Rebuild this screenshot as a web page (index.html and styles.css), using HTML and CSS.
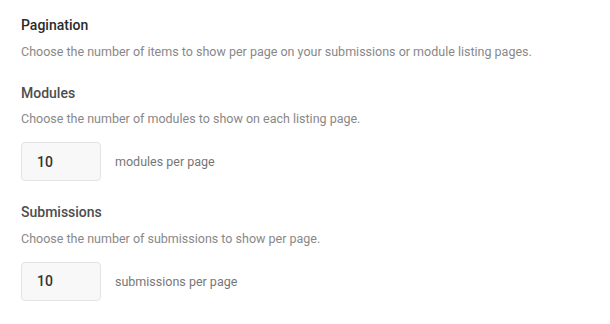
FILE: index.html
```html
<!DOCTYPE html>
<html>
<head>
<meta charset="utf-8">
<link rel="stylesheet" href="styles.css">
</head>
<body>
<div class="settings">
  <section class="group">
    <h2 class="title">Pagination</h2>
    <p class="desc">Choose the number of items to show per page on your submissions or module listing pages.</p>
  </section>
  <section class="group">
    <h3 class="subtitle">Modules</h3>
    <p class="desc">Choose the number of modules to show on each listing page.</p>
    <div class="field">
      <input class="num" type="text" value="10">
      <span class="unit">modules per page</span>
    </div>
  </section>
  <section class="group">
    <h3 class="subtitle">Submissions</h3>
    <p class="desc">Choose the number of submissions to show per page.</p>
    <div class="field">
      <input class="num" type="text" value="10">
      <span class="unit">submissions per page</span>
    </div>
  </section>
</div>
</body>
</html>
```
FILE: styles.css
```css
html, body {
  margin: 0;
  background: #fff;
}
body {
  font-family: Roboto, "Liberation Sans", sans-serif;
}
.settings {
  padding: 15px 21px 0;
}
.title {
  margin: 0;
  font-size: 14px;
  font-weight: 500;
  line-height: 20px;
  color: #2b2b2b;
}
.subtitle {
  margin: 0;
  font-size: 14px;
  font-weight: 500;
  line-height: 20px;
  color: #4d4d4d;
}
.desc {
  margin: 7.5px 0 0;
  font-size: 12.5px;
  line-height: 18px;
  color: #888;
}
.group:nth-child(2) {
  margin-top: 22px;
}
.group:nth-child(3) {
  margin-top: 21px;
}
.field {
  display: flex;
  align-items: center;
  gap: 14px;
  margin-top: 14px;
}
.num {
  box-sizing: border-box;
  width: 80px;
  height: 39px;
  padding: 0 15px;
  border: 1px solid #e3e3e3;
  border-radius: 4px;
  background: #f8f8f8;
  font-family: Roboto, "Liberation Sans", sans-serif;
  font-size: 14px;
  font-weight: 500;
  color: #333;
  outline: none;
}
.unit {
  font-size: 12.5px;
  color: #777;
}
```
